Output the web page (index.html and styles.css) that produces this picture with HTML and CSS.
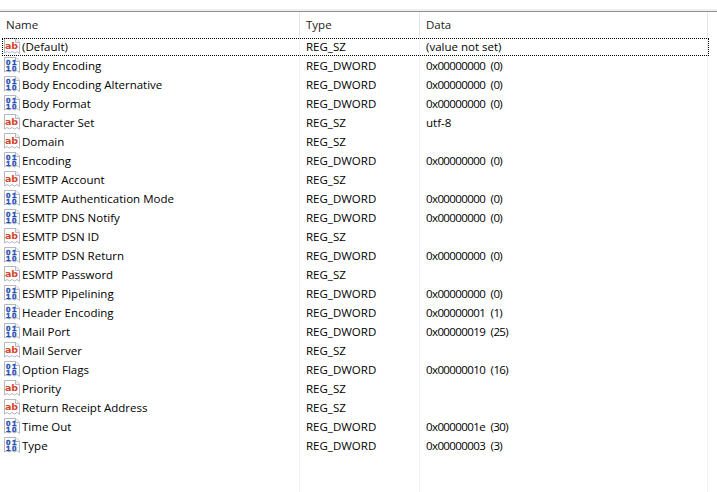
FILE: index.html
```html
<!DOCTYPE html>
<html lang="en">
<head>
<meta charset="utf-8">
<title>Registry</title>
<link rel="stylesheet" href="styles.css">
</head>
<body>
<svg class="defs" width="0" height="0" aria-hidden="true">
  <defs>
    <symbol id="page" viewBox="0 0 16 16">
      <path d="M.5 .5H12L15.500 4V15.500L13 13.500L10.500 15L8 13.500L5.500 15L3 13.500L.5 15Z" fill="#fff" stroke="#b4b8c2"/>
      <path d="M11.500 .5V4.500H15.500" fill="#eef0f4" stroke="#b4b8c2"/>
    </symbol>
    <symbol id="sz" viewBox="0 0 16 16">
      <use href="#page"/>
      <text x="7.500" y="11" class="ab">ab</text>
    </symbol>
    <symbol id="dw" viewBox="0 0 16 16">
      <use href="#page"/>
      <text x="8" y="7.500" class="bits">01</text>
      <text x="8" y="13.500" class="bits">10</text>
    </symbol>
  </defs>
</svg>
<div class="topstrip"></div>
<main class="list">
  <header class="row head"><span class="name">Name</span><span class="type">Type</span><span class="data">Data</span></header>
  <div class="rows" id="rows">
    <div class="row focus"><svg class="ico"><use href="#sz"/></svg><span class="name">(Default)</span><span class="type">REG_SZ</span><span class="data">(value not set)</span></div>
    <div class="row"><svg class="ico"><use href="#dw"/></svg><span class="name">Body Encoding</span><span class="type">REG_DWORD</span><span class="data hex">0x00000000 (0)</span></div>
    <div class="row"><svg class="ico"><use href="#dw"/></svg><span class="name">Body Encoding Alternative</span><span class="type">REG_DWORD</span><span class="data hex">0x00000000 (0)</span></div>
    <div class="row"><svg class="ico"><use href="#dw"/></svg><span class="name">Body Format</span><span class="type">REG_DWORD</span><span class="data hex">0x00000000 (0)</span></div>
    <div class="row"><svg class="ico"><use href="#sz"/></svg><span class="name">Character Set</span><span class="type">REG_SZ</span><span class="data">utf-8</span></div>
    <div class="row"><svg class="ico"><use href="#sz"/></svg><span class="name">Domain</span><span class="type">REG_SZ</span><span class="data"></span></div>
    <div class="row"><svg class="ico"><use href="#dw"/></svg><span class="name">Encoding</span><span class="type">REG_DWORD</span><span class="data hex">0x00000000 (0)</span></div>
    <div class="row"><svg class="ico"><use href="#sz"/></svg><span class="name">ESMTP Account</span><span class="type">REG_SZ</span><span class="data"></span></div>
    <div class="row"><svg class="ico"><use href="#dw"/></svg><span class="name">ESMTP Authentication Mode</span><span class="type">REG_DWORD</span><span class="data hex">0x00000000 (0)</span></div>
    <div class="row"><svg class="ico"><use href="#dw"/></svg><span class="name">ESMTP DNS Notify</span><span class="type">REG_DWORD</span><span class="data hex">0x00000000 (0)</span></div>
    <div class="row"><svg class="ico"><use href="#sz"/></svg><span class="name">ESMTP DSN ID</span><span class="type">REG_SZ</span><span class="data"></span></div>
    <div class="row"><svg class="ico"><use href="#dw"/></svg><span class="name">ESMTP DSN Return</span><span class="type">REG_DWORD</span><span class="data hex">0x00000000 (0)</span></div>
    <div class="row"><svg class="ico"><use href="#sz"/></svg><span class="name">ESMTP Password</span><span class="type">REG_SZ</span><span class="data"></span></div>
    <div class="row"><svg class="ico"><use href="#dw"/></svg><span class="name">ESMTP Pipelining</span><span class="type">REG_DWORD</span><span class="data hex">0x00000000 (0)</span></div>
    <div class="row"><svg class="ico"><use href="#dw"/></svg><span class="name">Header Encoding</span><span class="type">REG_DWORD</span><span class="data hex">0x00000001 (1)</span></div>
    <div class="row"><svg class="ico"><use href="#dw"/></svg><span class="name">Mail Port</span><span class="type">REG_DWORD</span><span class="data hex">0x00000019 (25)</span></div>
    <div class="row"><svg class="ico"><use href="#sz"/></svg><span class="name">Mail Server</span><span class="type">REG_SZ</span><span class="data"></span></div>
    <div class="row"><svg class="ico"><use href="#dw"/></svg><span class="name">Option Flags</span><span class="type">REG_DWORD</span><span class="data hex">0x00000010 (16)</span></div>
    <div class="row"><svg class="ico"><use href="#sz"/></svg><span class="name">Priority</span><span class="type">REG_SZ</span><span class="data"></span></div>
    <div class="row"><svg class="ico"><use href="#sz"/></svg><span class="name">Return Receipt Address</span><span class="type">REG_SZ</span><span class="data"></span></div>
    <div class="row"><svg class="ico"><use href="#dw"/></svg><span class="name">Time Out</span><span class="type">REG_DWORD</span><span class="data hex">0x0000001e (30)</span></div>
    <div class="row"><svg class="ico"><use href="#dw"/></svg><span class="name">Type</span><span class="type">REG_DWORD</span><span class="data hex">0x00000003 (3)</span></div>
  </div>
</main>
</body>
</html>
```
FILE: styles.css
```css
* { box-sizing: border-box; }
html, body { margin: 0; background: #fff; overflow: hidden; }
body { font: 11.5px/19px "Open Sans", "Noto Sans", sans-serif; color: #000; display: flex; flex-direction: column; height: 492px; }
.defs { position: absolute; }
.ab { font: 700 9.500px "DejaVu Sans", sans-serif; fill: #d8442a; text-anchor: middle; }
.bits { font: 700 8px "Liberation Sans", sans-serif; letter-spacing: 1.500px; fill: #1f4bb0; stroke: #1f4bb0; stroke-width: .35px; text-anchor: middle; }
.topstrip { flex: none; height: 3px; margin-top: 9px; background: #f0f0f0; border-bottom: 1px solid #8f8f96; }
.list { flex: 1; background:
  linear-gradient(#e5e5e5, #e5e5e5) 299px 0 / 1px 25px no-repeat,
  linear-gradient(#e5e5e5, #e5e5e5) 419px 0 / 1px 25px no-repeat,
  linear-gradient(#e5e5e5, #e5e5e5) 707px 0 / 1px 25px no-repeat,
  linear-gradient(#eef3fa, #eef3fa) 299px 25px / 1px 100% no-repeat,
  linear-gradient(#eef3fa, #eef3fa) 419px 25px / 1px 100% no-repeat,
  linear-gradient(#eef3fa, #eef3fa) 707px 25px / 1px 100% no-repeat; }
.row { position: relative; display: grid; grid-template-columns: 22px 284px 120px 1fr; height: 19px; align-items: center; white-space: nowrap; }
.head { grid-template-columns: 300px 120px 1fr; height: 25px; color: #222; padding-left: 6px; }
.hex { letter-spacing: -0.6px; word-spacing: 3px; }
.focus::after { content: ""; position: absolute; left: 2px; width: 705px; top: 1px; height: 16px; border: 1px dotted #000; }
.ico { width: 16px; height: 16px; margin-left: 4px; margin-bottom: 1px; }
```
